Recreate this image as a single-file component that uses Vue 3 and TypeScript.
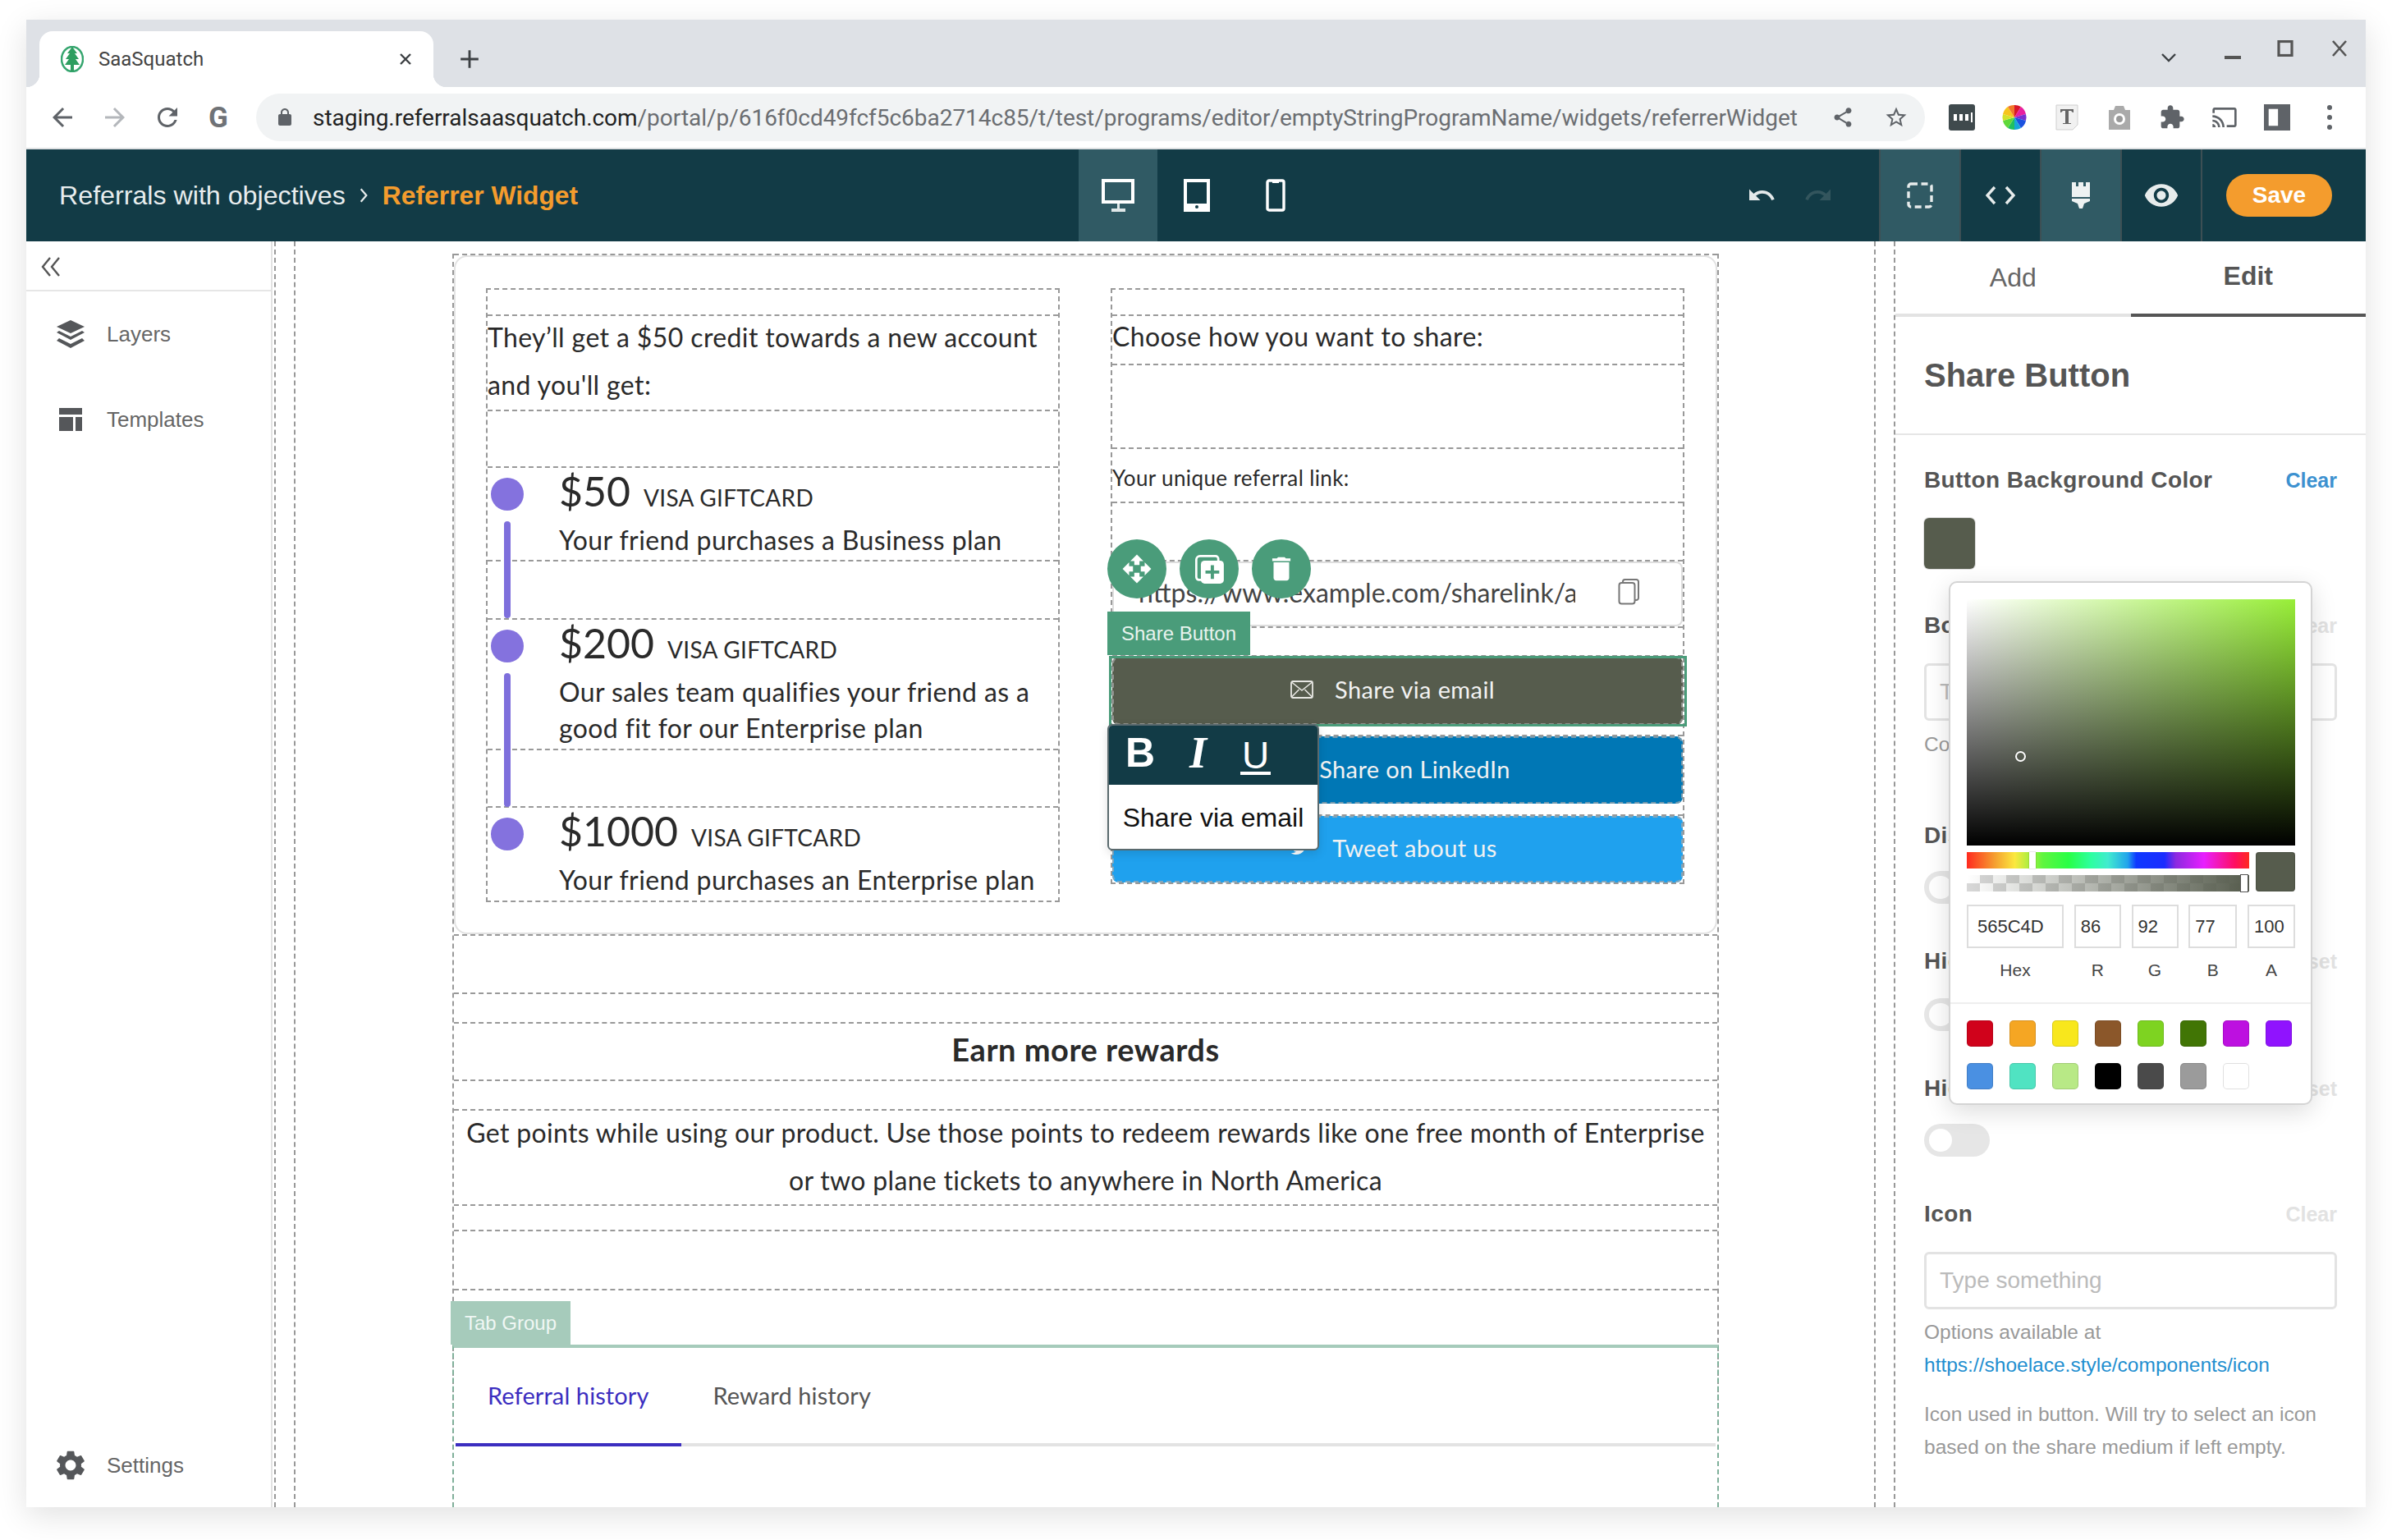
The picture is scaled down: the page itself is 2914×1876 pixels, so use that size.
<template>
  <div class="screen">
    <div class="window">
      <div class="tabstrip">
        <div class="tab">
          <svg class="favicon" viewBox="0 0 28 32"><ellipse cx="14" cy="16" rx="13" ry="15" fill="none" stroke="#35a56e" stroke-width="2.5"/><path d="M14 1 8 9l3 0-5 7h4l-5 7h7v8h4v-8h7l-5-7h4l-5-7h3z" fill="#2f9e60"/></svg>
          <span class="tab-title">SaaSquatch</span>
          <svg class="tab-x" viewBox="0 0 16 16"><path d="M2 2l12 12M14 2 2 14" stroke="#3c4043" stroke-width="2.4"/></svg>
        </div>
        <svg class="tab-plus" viewBox="0 0 24 24"><path d="M12 2v20M2 12h20" stroke="#3c4043" stroke-width="2.6"/></svg>
        <div class="win-controls">
          <svg class="wc wc-down" viewBox="0 0 20 12"><path d="M2 2l8 8 8-8" fill="none" stroke="#3c4043" stroke-width="2.4"/></svg>
          <svg class="wc wc-min" viewBox="0 0 20 20"><path d="M0 14h20" stroke="#555" stroke-width="4"/></svg>
          <svg class="wc wc-max" viewBox="0 0 20 20"><rect x="2" y="1.5" width="16" height="17" fill="none" stroke="#555" stroke-width="3.2"/></svg>
          <svg class="wc wc-close" viewBox="0 0 20 20"><path d="M2 1l16 18M18 1 2 19" stroke="#555" stroke-width="2.6"/></svg>
        </div>
      </div>

      <div class="toolbar">
        <svg class="nav-ico" viewBox="0 0 24 24"><path fill="#5f6368" d="M20 11H7.83l5.59-5.59L12 4l-8 8 8 8 1.41-1.41L7.83 13H20v-2z"/></svg>
        <svg class="nav-ico" viewBox="0 0 24 24"><path fill="#b4b7bb" d="M12 4l-1.41 1.41L16.17 11H4v2h12.17l-5.58 5.59L12 20l8-8z"/></svg>
        <svg class="nav-ico" viewBox="0 0 24 24"><path fill="#5f6368" d="M17.65 6.35C16.2 4.9 14.21 4 12 4c-4.42 0-7.99 3.58-7.99 8s3.57 8 7.99 8c3.73 0 6.84-2.55 7.73-6h-2.08c-.82 2.33-3.04 4-5.65 4-3.31 0-6-2.69-6-6s2.69-6 6-6c1.66 0 3.14.69 4.22 1.78L13 11h7V4l-2.35 2.35z"/></svg>
        <span class="google-g">G</span>
        <div class="omnibox">
          <svg class="lock" viewBox="0 0 24 24"><path fill="#5f6368" d="M18 8h-1V6c0-2.76-2.24-5-5-5S7 3.24 7 6v2H6c-1.1 0-2 .9-2 2v10c0 1.1.9 2 2 2h12c1.1 0 2-.9 2-2V10c0-1.1-.9-2-2-2zM9 6c0-1.66 1.34-3 3-3s3 1.34 3 3v2H9V6z"/></svg>
          <span class="url"><b>staging.referralsaasquatch.com</b>/portal/p/616f0cd49fcf5c6ba2714c85/t/test/programs/editor/emptyStringProgramName/widgets/referrerWidget</span>
          <svg class="omni-ico" viewBox="0 0 24 24"><path fill="#5f6368" d="M18 16.08c-.76 0-1.44.3-1.96.77L8.91 12.7c.05-.23.09-.46.09-.7s-.04-.47-.09-.7l7.05-4.11c.54.5 1.25.81 2.04.81 1.66 0 3-1.34 3-3s-1.34-3-3-3-3 1.34-3 3c0 .24.04.47.09.7L8.04 9.81C7.5 9.31 6.79 9 6 9c-1.66 0-3 1.34-3 3s1.34 3 3 3c.79 0 1.5-.31 2.04-.81l7.12 4.16c-.05.21-.08.43-.08.65 0 1.61 1.31 2.92 2.92 2.92s2.92-1.31 2.92-2.92-1.31-2.92-2.92-2.92z"/></svg>
          <svg class="omni-ico" viewBox="0 0 24 24"><path fill="#5f6368" d="M22 9.24l-7.19-.62L12 2 9.19 8.63 2 9.24l5.46 4.73L5.82 21 12 17.27 18.18 21l-1.63-7.03L22 9.24zM12 15.4l-3.76 2.27 1-4.28-3.32-2.88 4.38-.38L12 6.1l1.71 4.04 4.38.38-3.32 2.88 1 4.28L12 15.4z"/></svg>
        </div>
        <div class="extensions">
          <svg class="ext" viewBox="0 0 32 32"><rect width="32" height="32" rx="3" fill="#3f4a4d"/><rect x="6" y="12" width="4" height="8" fill="#fff"/><rect x="13" y="12" width="4" height="8" fill="#fff"/><rect x="20" y="12" width="4" height="8" fill="#fff"/><rect x="27" y="10" width="2" height="12" fill="#fff"/></svg>
          <svg class="ext" viewBox="0 0 32 32"><path d="M16 16V1a15 15 0 0 1 8 2z" fill="#d8162b"/><path d="M16 16 24 3a15 15 0 0 1 6 9z" fill="#e91ea0"/><path d="M16 16 30 12a15 15 0 0 1 0 8z" fill="#7a2fd0"/><path d="M16 16 30 20a15 15 0 0 1-6 9z" fill="#1b52e0"/><path d="M16 16 24 29a15 15 0 0 1-8 2z" fill="#16a7d8"/><path d="M16 16v15a15 15 0 0 1-8-2z" fill="#20c060"/><path d="M16 16 8 29a15 15 0 0 1-6-9z" fill="#5fd83a"/><path d="M16 16 2 20a15 15 0 0 1 0-8z" fill="#d4e12a"/><path d="M16 16 2 12a15 15 0 0 1 6-9z" fill="#f6c41c"/><path d="M16 16 8 3a15 15 0 0 1 8-2z" fill="#f2782a"/></svg>
          <svg class="ext" viewBox="0 0 32 32"><path d="M3 1h26v24l-6 6H3z" fill="#f1f1f1" stroke="#cfcfcf"/><path d="M8 6h16v4h-1l-2-2h-3v15h3v1H11v-1h3V8h-3L9 10H8z" fill="#666"/></svg>
          <svg class="ext" viewBox="0 0 32 32"><path d="M3 7h6l2-5h10l2 5h6v24H3z" fill="#aaa"/><circle cx="16" cy="18" r="7" fill="#fff"/><circle cx="16" cy="18" r="4" fill="#999"/></svg>
          <svg class="ext" viewBox="0 0 24 24"><path fill="#5f6368" d="M20.5 11H19V7c0-1.1-.9-2-2-2h-4V3.5C13 2.12 11.88 1 10.5 1S8 2.12 8 3.5V5H4c-1.1 0-1.99.9-1.99 2v3.8H3.5c1.49 0 2.7 1.21 2.7 2.7s-1.21 2.7-2.7 2.7H2V20c0 1.1.9 2 2 2h3.8v-1.5c0-1.49 1.21-2.7 2.7-2.7 1.49 0 2.7 1.21 2.7 2.7V22H17c1.1 0 2-.9 2-2v-4h1.5c1.38 0 2.5-1.12 2.5-2.5S21.88 11 20.5 11z"/></svg>
          <svg class="ext" viewBox="0 0 24 24"><path fill="#5f6368" d="M21 3H3c-1.1 0-2 .9-2 2v3h2V5h18v14h-7v2h7c1.1 0 2-.9 2-2V5c0-1.1-.9-2-2-2zM1 18v3h3c0-1.66-1.34-3-3-3zm0-4v2c2.76 0 5 2.24 5 5h2c0-3.87-3.13-7-7-7zm0-4v2c4.97 0 9 4.03 9 9h2c0-6.08-4.93-11-11-11z"/></svg>
          <svg class="ext" viewBox="0 0 28 28"><path fill="#5f6368" d="M0 0h28v28H0z"/><path fill="#fff" d="M5 5h10v18H5z"/></svg>
          <svg class="ext ext-dots" viewBox="0 0 8 32"><circle cx="4" cy="4" r="3" fill="#5f6368"/><circle cx="4" cy="16" r="3" fill="#5f6368"/><circle cx="4" cy="28" r="3" fill="#5f6368"/></svg>
        </div>
      </div>

      <header class="appbar">
        <div class="crumbs">
          <span class="crumb">Referrals with objectives</span>
          <svg class="crumb-sep" viewBox="0 0 10 18"><path d="M2 2l6 7-6 7" fill="none" stroke="#e6ecec" stroke-width="2"/></svg>
          <span class="crumb-current">Referrer Widget</span>
        </div>
        <div class="devices">
          <div class="seg seg-device active">
            <svg viewBox="0 0 40 40" class="seg-ico"><path d="M2 2h36v26H2z" fill="none" stroke="#fff" stroke-width="4"/><path d="M19 30h3v6h-3zM12 36h17v4H12z" fill="#dfe7e8"/></svg>
          </div>
          <div class="seg seg-device">
            <svg viewBox="0 0 32 40" class="seg-ico seg-tablet"><path d="M2 2h28v36H2z" fill="none" stroke="#fff" stroke-width="4"/><path d="M2 30h28v8H2z" fill="#fff"/><circle cx="16" cy="34" r="2" fill="#123b46"/></svg>
          </div>
          <div class="seg seg-device">
            <svg viewBox="0 0 24 40" class="seg-ico seg-phone"><rect x="2" y="2" width="20" height="36" rx="2" fill="none" stroke="#fff" stroke-width="3.4"/><path d="M8 2h8v3H8z" fill="#fff"/></svg>
          </div>
        </div>
        <div class="history">
          <svg viewBox="0 0 24 24" class="hist"><path fill="#e3e9ea" d="M12.5 8c-2.65 0-5.05.99-6.9 2.6L2 7v9h9l-3.62-3.62c1.39-1.16 3.16-1.88 5.12-1.88 3.54 0 6.55 2.31 7.6 5.5l2.37-.78C21.08 11.03 17.15 8 12.5 8z"/></svg>
          <svg viewBox="0 0 24 24" class="hist"><path fill="#33555d" d="M18.4 10.6C16.55 8.99 14.15 8 11.5 8c-4.65 0-8.58 3.03-9.96 7.22L3.9 16c1.05-3.19 4.05-5.5 7.6-5.5 1.95 0 3.73.72 5.12 1.88L13 16h9V7l-3.6 3.6z"/></svg>
        </div>
        <div class="tools">
          <div class="seg seg-tool active">
            <svg viewBox="0 0 32 32" class="tool-ico"><rect x="2" y="2" width="28" height="28" rx="3" fill="none" stroke="#e7ecec" stroke-width="3.4" stroke-dasharray="8 4.5"/></svg>
          </div>
          <div class="seg seg-tool">
            <svg viewBox="0 0 36 24" class="tool-ico tool-code"><path d="M11 2 2 12l9 10M25 2l9 10-9 10" fill="none" stroke="#e7ecec" stroke-width="3.4"/></svg>
          </div>
          <div class="seg seg-tool active">
            <svg viewBox="0 0 24 32" class="tool-ico tool-brush"><path d="M1 0h5v5h3V0h6v5h3V0h5v18H1z" fill="#eef2f2"/><path d="M1 20h22v3l-7 3-2 6h-4l-2-6-7-3z" fill="#eef2f2"/></svg>
          </div>
          <div class="seg seg-tool">
            <svg viewBox="0 0 24 24" class="tool-ico tool-eye"><path fill="#e7ecec" d="M12 4.5C7 4.5 2.73 7.61 1 12c1.73 4.39 6 7.5 11 7.5s9.27-3.11 11-7.5c-1.73-4.39-6-7.5-11-7.5zM12 17c-2.76 0-5-2.24-5-5s2.24-5 5-5 5 2.24 5 5-2.24 5-5 5zm0-8c-1.66 0-3 1.34-3 3s1.34 3 3 3 3-1.34 3-3-1.34-3-3-3z"/></svg>
          </div>
        </div>
        <button class="save">Save</button>
      </header>

      <div class="workspace">
        <aside class="sidebar">
          <div class="side-head">
            <svg class="collapse" viewBox="0 0 24 26"><path d="M11 2 2 13l9 11M22 2l-9 11 9 11" fill="none" stroke="#555" stroke-width="2.4"/></svg>
          </div>
          <div class="side-item side-first">
            <svg class="side-ico" viewBox="0 0 36 34"><path fill="#55575a" d="M18 0 35 8 18 16 1 8z"/><path fill="#55575a" d="M4 13l14 7 14-7 3 2-17 9-17-9z"/><path fill="#55575a" d="M4 22l14 7 14-7 3 3-17 9-17-9z"/></svg>
            <span>Layers</span>
          </div>
          <div class="side-item">
            <svg class="side-ico side-tpl" viewBox="0 0 28 28"><path fill="#55575a" d="M0 0h28v8H0zM0 11h17v17H0zM20 11h8v17h-8z"/></svg>
            <span>Templates</span>
          </div>
          <div class="side-item side-bottom">
            <svg class="side-ico side-gear" viewBox="2 2 20 20"><path fill="#55575a" d="M19.14 12.94c.04-.3.06-.61.06-.94 0-.32-.02-.64-.07-.94l2.03-1.58c.18-.14.23-.41.12-.61l-1.92-3.32c-.12-.22-.37-.29-.59-.22l-2.39.96c-.5-.38-1.03-.7-1.62-.94l-.36-2.54c-.04-.24-.24-.41-.48-.41h-3.84c-.24 0-.43.17-.47.41l-.36 2.54c-.59.24-1.13.57-1.62.94l-2.39-.96c-.22-.08-.47 0-.59.22L2.74 8.87c-.12.21-.08.47.12.61l2.03 1.58c-.05.3-.09.63-.09.94s.02.64.07.94l-2.03 1.58c-.18.14-.23.41-.12.61l1.92 3.32c.12.22.37.29.59.22l2.39-.96c.5.38 1.03.7 1.62.94l.36 2.54c.05.24.24.41.48.41h3.84c.24 0 .44-.17.47-.41l.36-2.54c.59-.24 1.13-.56 1.62-.94l2.39.96c.22.08.47 0 .59-.22l1.92-3.32c.12-.22.07-.47-.12-.61l-2.01-1.58zM12 15.6c-1.98 0-3.6-1.62-3.6-3.6s1.62-3.6 3.6-3.6 3.6 1.62 3.6 3.6-1.62 3.6-3.6 3.6z"/></svg>
            <span>Settings</span>
          </div>
        </aside>

        <main class="canvas">
          <div class="guide-outer">
            <div class="guide-inner">
              <div class="page">
                <section class="card">
                  <div class="card-inner">
                    <div class="col">
                      <div class="row h32"></div>
                      <div class="row h116 lead"><div class="lead-in">They’ll get a $50 credit towards a new account<br />and you'll get:</div></div>
                      <div class="row h69"></div>
                      <template v-for="(r, i) in rewards" :key="r.amount">
                        <div class="row item" :class="r.cls">
                          <span class="dot"></span>
                          <span v-if="r.line" class="line" :style="{ height: r.line + 'px' }"></span>
                          <div class="item-text">
                            <div class="amount"><span class="amount-num">{{ r.amount }}</span><span class="amount-kind">VISA GIFTCARD</span></div>
                            <div class="item-desc">
                              <div v-for="d in r.desc" :key="d">{{ d }}</div>
                            </div>
                          </div>
                        </div>
                        <div v-if="i < rewards.length - 1" class="row" :class="r.gap"></div>
                      </template>
                    </div>
                    <div class="col col-share">
                      <div class="row h32"></div>
                      <div class="row h60 choose">Choose how you want to share:</div>
                      <div class="row h102"></div>
                      <div class="row h66 link-label">Your unique referral link:</div>
                      <div class="row h71"></div>
                      <div class="row h81 copy-row">
                        <div class="copy-box">
                          <span class="copy-url">https://www.example.com/sharelink/a</span>
                          <svg class="copy-ico" viewBox="0 0 26 32"><rect x="1.5" y="5" width="19" height="25.5" rx="3" fill="#fff" stroke="#777" stroke-width="2"/><path d="M6 4V3.5A2.5 2.5 0 0 1 8.5 1h14A2.5 2.5 0 0 1 25 3.5v20a2.5 2.5 0 0 1-2.5 2.5H21" fill="none" stroke="#777" stroke-width="2"/></svg>
                        </div>
                      </div>
                      <div class="row h35"></div>
                      <div class="share-btn email">
                        <svg class="btn-ico" viewBox="0 0 28 22"><rect x="1" y="1" width="26" height="20" rx="2" fill="none" stroke="#e8e8e4" stroke-width="1.8"/><path d="M1.5 2 14 12 26.5 2M1.5 20l9-9M26.5 20l-9-9" fill="none" stroke="#e8e8e4" stroke-width="1.6"/></svg>
                        <span>Share via email</span>
                      </div>
                      <div class="row h14"></div>
                      <div class="share-btn linkedin"><span class="btn-ico"></span><span>Share on LinkedIn</span></div>
                      <div class="row h15"></div>
                      <div class="share-btn tweet">
                        <svg class="btn-ico" viewBox="0 0 24 24"><path fill="#fff" d="M23 5c-.8.4-1.7.6-2.6.7.9-.6 1.6-1.4 2-2.5-.9.5-1.8.9-2.9 1.1C18.7 3.5 17.5 3 16.2 3c-2.5 0-4.5 2-4.5 4.5 0 .4 0 .7.1 1C8 8.3 4.7 6.5 2.5 3.8c-.4.7-.6 1.5-.6 2.3 0 1.6.8 2.9 2 3.7-.7 0-1.4-.2-2-.6v.1c0 2.2 1.5 4 3.6 4.4-.7.2-1.4.2-2 .1.6 1.8 2.2 3.1 4.2 3.1C6.1 18 4 18.8 1.8 18.8c-.4 0-.7 0-1.1-.1C2.7 20 5.1 20.7 7.6 20.7c8.3 0 12.8-6.9 12.8-12.8v-.6c.9-.6 1.6-1.4 2.6-2.3z"/></svg>
                        <span>Tweet about us</span>
                      </div>

                      <div class="selection"></div>
                      <div class="sel-actions">
                        <span class="sel-btn"><svg viewBox="0 0 24 24"><path fill="#fff" d="M10 9h4V6h3l-5-5-5 5h3v3zm-1 1H6V7l-5 5 5 5v-3h3v-4zm14 2l-5-5v3h-3v4h3v3l5-5zm-9 3h-4v3H7l5 5 5-5h-3v-3z"/></svg></span>
                        <span class="sel-btn"><svg viewBox="0 0 34 34"><path d="M9 29H6a3 3 0 0 1-3-3V7a4 4 0 0 1 4-4h17a3 3 0 0 1 3 3v2" fill="none" stroke="#fff" stroke-width="2.4"/><rect x="8" y="8" width="25" height="25" rx="4" fill="#fff"/><path d="M20.5 13v15M13 20.5h15" stroke="#4a9c7a" stroke-width="3.5"/></svg></span>
                        <span class="sel-btn"><svg viewBox="0 0 24 24"><path fill="#fff" d="M6 19c0 1.1.9 2 2 2h8c1.1 0 2-.9 2-2V7H6v12zM19 4h-3.5l-1-1h-5l-1 1H5v2h14V4z"/></svg></span>
                      </div>
                      <div class="sel-label">Share Button</div>
                      <div class="inline-editor">
                        <div class="ie-bar"><span class="ie-b">B</span><span class="ie-i">I</span><span class="ie-u">U</span></div>
                        <div class="ie-text">Share via email</div>
                      </div>
                    </div>
                  </div>
                </section>
                <div class="strip h71"></div>
                <div class="strip h36"></div>
                <h2 class="strip h70 earn">Earn more rewards</h2>
                <div class="strip h36"></div>
                <div class="strip h116 points"><p>Get points while using our product. Use those points to redeem rewards like one free month of Enterprise<br />or two plane tickets to anywhere in North America</p></div>
                <div class="strip h31"></div>
                <div class="strip h72"></div>
                <div class="tab-spacer"></div>
                <section class="tabgroup">
                  <div class="tg-label">Tab Group</div>
                  <div class="tg-tabs">
                    <span class="tg-tab on">Referral history</span>
                    <span class="tg-tab">Reward history</span>
                  </div>
                </section>
              </div>
            </div>
          </div>
        </main>

        <aside class="panel">
          <div class="panel-tabs">
            <div class="ptab">Add</div>
            <div class="ptab on">Edit</div>
          </div>
          <h3 class="panel-title">Share Button</h3>
          <div class="panel-body">
            <div class="field-head"><label>Button Background Color</label><a class="clear">Clear</a></div>
            <div class="swatch"></div>

            <div class="field-head m51"><label>Border Color</label><a class="clear faint">Clear</a></div>
            <div class="text-input m28"><span>Type something</span></div>
            <div class="help help-short m14">Color of the border</div>

            <div class="field-head m78"><label>Disabled</label></div>
            <div class="toggle m25"><i></i></div>

            <div class="field-head m52"><label>Hide Icon</label><a class="clear faint">Reset</a></div>
            <div class="toggle m27"><i></i></div>

            <div class="field-head m52"><label>Hide Text</label><a class="clear faint">Reset</a></div>
            <div class="toggle m25"><i></i></div>

            <div class="field-head m52"><label>Icon</label><a class="clear faint">Clear</a></div>
            <div class="text-input m28"><span>Type something</span></div>
            <div class="help m8">Options available at<br /><a class="help-link">https://shoelace.style/components/icon</a></div>
            <div class="help m20">Icon used in button. Will try to select an icon<br />based on the share medium if left empty.</div>
          </div>

          <div class="picker">
            <div class="sat"><span class="sat-dot"></span></div>
            <div class="bars">
              <div class="bars-left">
                <div class="hue"><i class="thumb thumb-hue"></i></div>
                <div class="alpha"><i class="thumb thumb-alpha"></i></div>
              </div>
              <div class="preview"></div>
            </div>
            <div class="fields">
              <div v-for="f in fields" :key="f.label" class="fld" :class="f.cls">
                <div class="fld-box">{{ f.value }}</div>
                <div class="fld-label">{{ f.label }}</div>
              </div>
            </div>
            <div class="presets">
              <span v-for="c in presets" :key="c" class="preset" :style="{ background: c }"></span>
            </div>
          </div>
        </aside>
      </div>
    </div>
  </div>
</template>

<script setup lang="ts">
const rewards = [
  { amount: '$50', desc: ['Your friend purchases a Business plan'], cls: 'h114', gap: 'h71', line: 118 },
  { amount: '$200', desc: ['Our sales team qualifies your friend as a', 'good fit for our Enterprise plan'], cls: 'h159', gap: 'h70', line: 163 },
  { amount: '$1000', desc: ['Your friend purchases an Enterprise plan'], cls: 'h113 last', gap: '', line: 0 },
];

const fields = [
  { label: 'Hex', value: '565C4D', cls: 'fld-hex' },
  { label: 'R', value: '86', cls: 'fld-r' },
  { label: 'G', value: '92', cls: 'fld-g' },
  { label: 'B', value: '77', cls: 'fld-b' },
  { label: 'A', value: '100', cls: 'fld-a' },
];

const presets = [
  '#D0021B', '#F5A623', '#F8E71C', '#8B572A', '#7ED321', '#417505', '#BD10E0', '#9013FE',
  '#4A90E2', '#50E3C2', '#B8E986', '#000000', '#4A4A4A', '#9B9B9B', '#FFFFFF',
];
</script>

<style>
html, body { margin: 0; background: #fff; }
</style>

<style scoped>
.screen {
  width: 2914px;
  height: 1876px;
  padding: 24px 32px 0;
  box-sizing: border-box;
  overflow: hidden;
  font-family: "Liberation Sans", Arial, sans-serif;
}
.window {
  width: 2850px;
  height: 1812px;
  display: flex;
  flex-direction: column;
  background: #fff;
  box-shadow: 0 10px 36px rgba(0, 0, 0, 0.12);
}

/* browser chrome */
.tabstrip {
  height: 82px;
  flex: none;
  background: #dee1e6;
  display: flex;
  align-items: flex-end;
  padding-left: 16px;
  box-sizing: border-box;
}
.tab {
  width: 480px;
  height: 68px;
  background: #fff;
  border-radius: 16px 16px 0 0;
  display: flex;
  align-items: center;
  padding: 0 26px;
  box-sizing: border-box;
  position: relative;
}
.tab::before, .tab::after {
  content: '';
  position: absolute;
  bottom: 0;
  width: 16px;
  height: 16px;
}
.tab::before { left: -16px; background: radial-gradient(circle at 0 0, transparent 16px, #fff 16.5px); }
.tab::after { right: -16px; background: radial-gradient(circle at 100% 0, transparent 16px, #fff 16.5px); }
.favicon { width: 28px; height: 32px; flex: none; }
.tab-title { font-family: Roboto, sans-serif; font-size: 24px; color: #444; margin-left: 18px; flex: 1; }
.tab-x { width: 16px; height: 18px; }
.tab-plus { width: 26px; height: 26px; margin: 0 0 21px 31px; }
.win-controls {
  margin-left: auto;
  align-self: flex-start;
  display: flex;
  align-items: center;
  height: 84px;
  padding-right: 22px;
  gap: 46px;
}
.wc { width: 20px; height: 20px; }
.wc-down { margin-right: 12px; height: 14px; margin-top: 8px; }
.wc-max, .wc-close { margin-top: -14px; }
.wc-min { margin-right: -2px; }

.toolbar {
  height: 76px;
  flex: none;
  box-sizing: border-box;
  border-bottom: 2px solid #dfe1e3;
  display: flex;
  align-items: center;
  padding-left: 26px;
}
.nav-ico { width: 36px; height: 36px; margin-right: 28px; flex: none; }
.google-g { font-family: Roboto, sans-serif; font-weight: 700; font-size: 35px; color: #6f7276; width: 28px; margin-left: 4px; flex: none; }
.omnibox {
  margin-left: 30px;
  width: 2033px;
  flex: none;
  height: 58px;
  background: #f1f3f4;
  border-radius: 29px;
  display: flex;
  align-items: center;
  padding-left: 23px;
  box-sizing: border-box;
}
.lock { width: 24px; height: 26px; flex: none; }
.url { font-family: Roboto, sans-serif; font-size: 28px; letter-spacing: -0.03px; color: #6b6e72; margin-left: 22px; white-space: nowrap; flex: 1; }
.url b { font-weight: 400; color: #222; }
.omni-ico { width: 28px; height: 28px; margin-right: 36px; flex: none; }
.omni-ico:last-child { width: 30px; height: 30px; margin-right: 20px; }
.extensions { display: flex; align-items: center; margin-left: 29px; gap: 32px; }
.ext { width: 32px; height: 32px; flex: none; }
.ext-dots { width: 8px; margin-left: 12px; }

/* app bar */
.appbar {
  height: 112px;
  flex: none;
  background: #123b46;
  display: flex;
  align-items: stretch;
  padding-left: 40px;
}
.crumbs { width: 1242px; flex: none; display: flex; align-items: center; }
.crumb { color: #e8edee; font-size: 32.2px; }
.crumb-sep { width: 12px; height: 20px; margin: 0 17px 0 16px; }
.crumb-current { color: #f49c2d; font-size: 31.8px; font-weight: 700; }
.seg { display: flex; align-items: center; justify-content: center; }
.devices { display: flex; flex: none; }
.seg-device { width: 96px; }
.seg.active { background: #305a64; }
.seg-ico { width: 40px; height: 40px; }
.seg-tablet { width: 32px; }
.seg-phone { width: 24px; }
.history { width: 687px; flex: none; display: flex; align-items: center; padding-left: 526px; box-sizing: border-box; gap: 33px; }
.hist { width: 36px; height: 36px; }
.tools { display: flex; flex: none; }
.seg-tool { width: 96px; border-right: 2px solid #3d4f54; box-sizing: content-box; }
.seg-tool:first-child { border-left: 2px solid #3d4f54; }
.tool-ico { width: 32px; height: 32px; }
.tool-code { width: 36px; height: 24px; }
.tool-brush { width: 24px; height: 32px; }
.tool-eye { width: 44px; height: 44px; }
.save {
  width: 129px;
  height: 52px;
  margin: 30px 0 0 29px;
  border: 0;
  border-radius: 26px;
  background: #f49c2d;
  color: #fff;
  font: 700 28px "Liberation Sans", sans-serif;
  padding: 0;
}

/* workspace */
.workspace { flex: 1; display: flex; min-height: 0; }
.sidebar {
  width: 300px;
  flex: none;
  box-sizing: border-box;
  border-right: 2px solid #e2e2e2;
  display: flex;
  flex-direction: column;
}
.side-head { height: 61px; border-bottom: 2px solid #e6e6e6; box-sizing: border-box; padding: 18px 0 0 18px; }
.collapse { width: 24px; height: 26px; display: block; }
.side-item { display: flex; align-items: center; height: 36px; color: #666; font-size: 26px; padding-left: 36px; }
.side-ico { width: 36px; height: 34px; flex: none; margin-right: 26px; }
.side-first { margin-top: 34px; }
.side-item + .side-item { margin-top: 68px; }
.side-tpl { width: 28px; height: 28px; margin: 0 30px 0 4px; }
.side-bottom.side-item { margin-top: auto; margin-bottom: 33px; }
.side-gear { width: 36px; height: 36px; }

.canvas { flex: 1; min-width: 0; overflow: hidden; padding-left: 2px; }
.guide-outer {
  height: 100%;
  box-sizing: border-box;
  border: dashed #999;
  border-width: 0 2px;
}
.guide-inner {
  height: 100%;
  box-sizing: border-box;
  margin: 0 22px;
  border: dashed #999;
  border-width: 0 2px;
  padding: 15px 189px 0 191px;
  overflow: hidden;
}
.page {
  border: dashed #999;
  border-width: 0 2px;
  height: 100%;
  font-family: Lato, "Noto Sans", sans-serif;
  color: #2a2a2a;
  letter-spacing: 0.38px;
}
.card { box-sizing: border-box; height: 831px; border-top: 2px dashed #999; border-bottom: 2px dashed #999; }
.card-inner {
  height: 100%;
  box-sizing: border-box;
  border: 2px solid #e2e2e2;
  border-radius: 16px;
  padding: 38px 38px 0 37px;
  display: grid;
  grid-template-columns: 699px 699px;
  justify-content: space-between;
  align-items: start;
}
.col { border: 2px dashed #999; position: relative; box-sizing: border-box; }
.row { border-bottom: 2px dashed #999; box-sizing: border-box; display: flow-root; }
.h32 { height: 32px; } .h60 { height: 60px; } .h102 { height: 102px; } .h66 { height: 66px; }
.h71 { height: 71px; } .h81 { height: 81px; } .h35 { height: 35px; } .h14 { height: 14px; }
.h15 { height: 15px; } .h116 { height: 116px; } .h69 { height: 69px; } .h114 { height: 114px; }
.h159 { height: 159px; } .h113 { height: 113px; } .h70 { height: 70px; }
.h72 { height: 72px; } .h36 { height: 36px; } .h31 { height: 31px; }
.last { border-bottom: 0; }
.lead { font-size: 32px; line-height: 58px; }
.lead-in { margin-top: -3px; }
.choose { font-size: 32px; line-height: 50px; }
.link-label { font-size: 26px; line-height: 71px; }
.item { position: relative; }
.dot { position: absolute; left: 4px; top: 11.5px; width: 40px; height: 40px; border-radius: 50%; background: #8472de; }
.line { position: absolute; left: 20px; top: 64.5px; width: 8px; border-radius: 4px; background: #7e6fdc; z-index: 1; }
.item-text { margin-left: 87px; }
.amount { height: 69px; margin-top: -5px; display: flex; align-items: baseline; }
.amount-num { font-size: 50px; line-height: 66px; letter-spacing: 0; }
.amount-kind { font-size: 28px; margin-left: 16px; letter-spacing: 0.3px; }
.item-desc { font-size: 32px; line-height: 44px; margin-top: 2px; }

.copy-row { display: flex; }
.copy-box {
  flex: 1;
  box-sizing: border-box;
  border: 2px solid #dedede;
  border-radius: 8px;
  display: flex;
  align-items: center;
  padding: 0 0 5px 30px;
}
.copy-url { width: 532px; overflow: hidden; white-space: nowrap; font-size: 32px; letter-spacing: 0; color: #444; }
.copy-ico { width: 26px; height: 32px; margin-left: 52px; }
.share-btn {
  height: 82px;
  padding: 0 12px 4px 0;
  box-sizing: border-box;
  border-radius: 8px;
  outline: 2px dashed rgba(170, 170, 170, 0.7);
  outline-offset: -2px;
  display: flex;
  align-items: center;
  justify-content: center;
  color: #f2f2f2;
  font-size: 29px;
}
.email { background: #565c4d; height: 83px; }
.linkedin { background: #0077b5; }
.tweet { background: #1fa1ee; height: 81px; }
.btn-ico { width: 28px; height: 22px; margin-right: 26px; }

.selection {
  position: absolute;
  left: -4px;
  top: 446px;
  width: 704px;
  height: 86px;
  box-sizing: border-box;
  border: 3px solid #4a9c7a;
  pointer-events: none;
}
.sel-actions { position: absolute; left: -6px; top: 304px; display: flex; gap: 16px; }
.sel-btn { width: 72px; height: 72px; border-radius: 50%; background: #4a9c7a; display: flex; align-items: center; justify-content: center; }
.sel-btn svg { width: 38px; height: 38px; }
.sel-label {
  position: absolute;
  left: -6px;
  top: 392px;
  width: 174px;
  height: 53px;
  background: #4a9c7a;
  color: #e8f3ee;
  font: 24px/53px "Liberation Sans", sans-serif;
  letter-spacing: 0;
  text-align: center;
}
.inline-editor {
  position: absolute;
  left: -6px;
  top: 529px;
  width: 258px;
  height: 154px;
  background: #fff;
  border: 2px solid #5a6a6e;
  border-radius: 6px;
  box-sizing: border-box;
  font-family: "Liberation Sans", sans-serif;
  letter-spacing: 0;
  box-shadow: 0 4px 12px rgba(0, 0, 0, 0.12);
  overflow: hidden;
}
.ie-bar {
  height: 72px;
  padding: 0 0 6px 20px;
  box-sizing: border-box;
  background: #123b46;
  display: flex;
  align-items: center;
  color: #fff;
  font-size: 50px;
  font-weight: 700;
}
.ie-b { width: 70px; }
.ie-i { width: 72px; font-family: "Liberation Serif", serif; font-style: italic; font-size: 54px; padding-left: 8px; box-sizing: border-box; }
.ie-u { border-bottom: 4px solid #fff; font-size: 46px; line-height: 40px; padding: 0 2px; font-weight: 400; margin-top: 10px; margin-left: -2px; }
.ie-text { font-size: 32px; color: #111; line-height: 80px; text-align: center; white-space: nowrap; }

.strip { margin: 0; border-bottom: 2px dashed #999; box-sizing: border-box; display: flow-root; }
.earn { display: flex; align-items: center; justify-content: center; font-size: 38px; font-weight: 700; letter-spacing: 0.5px; padding-bottom: 6px; }
.points { font-size: 32px; line-height: 58px; text-align: center; letter-spacing: 0.32px; }
.points p { margin: -2px 0 0; white-space: nowrap; }
.tab-spacer { height: 66px; }
.tabgroup {
  position: relative;
  height: 300px;
  box-sizing: border-box;
  border-top: 4px solid #a6cbbb;
  border-left: 2px dashed #7fb09a;
  border-right: 2px dashed #7fb09a;
  margin: 0 -2px;
  padding: 0 2px;
}
.tg-label {
  position: absolute;
  left: -4px;
  top: -57px;
  width: 146px;
  height: 53px;
  background: #a6cbbb;
  color: #f0f7f4;
  font: 24px/53px "Liberation Sans", sans-serif;
  letter-spacing: 0;
  text-align: center;
}
.tg-tabs { display: flex; height: 120px; border-bottom: 4px solid #e3e3e3; box-sizing: border-box; }
.tg-tab { font-size: 29px; letter-spacing: 0.1px; color: #555; padding: 0 39px 6px; display: flex; align-items: center; height: 120px; box-sizing: border-box; }
.tg-tab.on { color: #3c2ec0; border-bottom: 4px solid #3c2ec0; padding-bottom: 2px; }

/* right panel */
.panel { width: 573px; flex: none; position: relative; overflow: hidden; }
.panel-tabs { display: flex; height: 92px; }
.ptab {
  flex: 1;
  box-sizing: border-box;
  border-bottom: 4px solid #e3e3e3;
  display: flex;
  align-items: center;
  justify-content: center;
  font-size: 32px;
  color: #666;
}
.ptab.on { color: #555; font-weight: 700; border-bottom-color: #555; padding-bottom: 4px; }
.panel-title {
  margin: 0;
  height: 144px;
  box-sizing: border-box;
  border-bottom: 2px solid #e6e6e6;
  padding-left: 35px;
  display: flex;
  align-items: center;
  font-size: 40px;
  color: #555;
}
.panel-body { padding: 37px 35px 0; }
.field-head { height: 36px; display: flex; align-items: center; justify-content: space-between; }
.field-head label { font-size: 28px; font-weight: 700; letter-spacing: 0.4px; color: #555; }
.clear { font-size: 25px; font-weight: 700; color: #3c91d0; }
.clear.faint { color: #e2e2e2; }
.m8 { margin-top: 8px; } .m14 { margin-top: 14px; } .m20 { margin-top: 20px; } .m25 { margin-top: 25px; } .m27 { margin-top: 27px; } .m28 { margin-top: 28px; }
.m51 { margin-top: 51px; } .m52 { margin-top: 52px; } .m78 { margin-top: 78px; }
.swatch { width: 62px; height: 62px; margin-top: 28px; background: #565c4d; border-radius: 6px; box-shadow: 0 0 0 1px #ddd; }
.text-input {
  height: 70px;
  box-sizing: border-box;
  border: 3px solid #e3e3e3;
  border-radius: 6px;
  display: flex;
  align-items: center;
  padding-left: 16px;
  font-size: 28px;
  color: #bbb;
}
.help { font-size: 24.5px; line-height: 40px; color: #999; }
.help-short { line-height: 30px; }
.help-link { color: #1f8fd0; }
.toggle { width: 80px; height: 40px; border-radius: 20px; background: #e6e6e6; position: relative; }
.toggle i { position: absolute; left: 6px; top: 6px; width: 28px; height: 28px; border-radius: 50%; background: #fff; }

.picker {
  position: absolute;
  left: 65px;
  top: 414px;
  width: 443px;
  height: 638px;
  box-sizing: border-box;
  background: #fff;
  border: 2px solid #d4d4d4;
  border-radius: 10px;
  padding: 20px 19px 0 20px;
  box-shadow: 0 8px 30px rgba(0, 0, 0, 0.14);
}
.sat {
  position: relative;
  height: 300px;
  background: linear-gradient(to top, #000, rgba(0, 0, 0, 0)), linear-gradient(to right, #fff, #98ee38);
}
.sat-dot {
  position: absolute;
  left: 59px;
  top: 185px;
  width: 13px;
  height: 13px;
  box-sizing: border-box;
  border: 2.5px solid #fff;
  border-radius: 50%;
  box-shadow: 0 0 1px rgba(0, 0, 0, 0.5);
}
.bars { display: flex; margin-top: 8px; }
.bars-left { width: 344px; }
.hue, .alpha { position: relative; height: 20px; }
.hue {
  background: linear-gradient(to right, #ff2a1f 0, #f5a030 10%, #fbe83f 17%, #5ef53f 27%, #29ff46 36%, #2effa0 44%, #41ebcf 50%, #22a3ec 57%, #0f39ff 60%, #1b2cff 70%, #8b2ae0 74%, #e81fff 84%, #ff0f60 95%, #ff2a1f 100%);
}
.alpha {
  margin-top: 8px;
  background: linear-gradient(to right, rgba(86, 92, 77, 0), #565c4d), repeating-conic-gradient(#d8d8d8 0 25%, #fff 0 50%) 0 0 / 32px 20px;
}
.thumb { position: absolute; top: 0; width: 8px; height: 20px; background: #fff; box-shadow: 0 0 1px rgba(0, 0, 0, 0.5); }
.thumb-hue { left: 76px; }
.thumb-alpha { right: 2px; box-shadow: 0 0 0 1px #555; }
.preview { width: 48px; height: 48px; margin-left: 8px; border-radius: 4px; background: #565c4d; box-shadow: inset 0 0 2px rgba(0, 0, 0, 0.4); }
.fields { display: flex; justify-content: space-between; margin-top: 16px; }
.fld { text-align: center; }
.fld-hex { width: 118px; } .fld-r, .fld-g { width: 57px; } .fld-b { width: 59px; } .fld-a { width: 58px; }
.fld-box {
  height: 53px;
  box-sizing: border-box;
  border: 2px solid #ddd;
  font-size: 22px;
  line-height: 49px;
  color: #333;
  text-align: left;
  padding-left: 6px;
}
.fld-hex .fld-box { padding-left: 11px; }
.fld-label { font-size: 21px; line-height: 26px; margin-top: 14px; color: #444; }
.presets {
  margin: 26px -19px 0 -20px;
  border-top: 2px solid #eee;
  padding: 20px 20px 0;
  display: grid;
  grid-template-columns: repeat(8, 32px);
  column-gap: 20px;
  row-gap: 20px;
}
.preset { height: 32px; border-radius: 5px; box-shadow: inset 0 0 0 1px rgba(0, 0, 0, 0.12); }
</style>
